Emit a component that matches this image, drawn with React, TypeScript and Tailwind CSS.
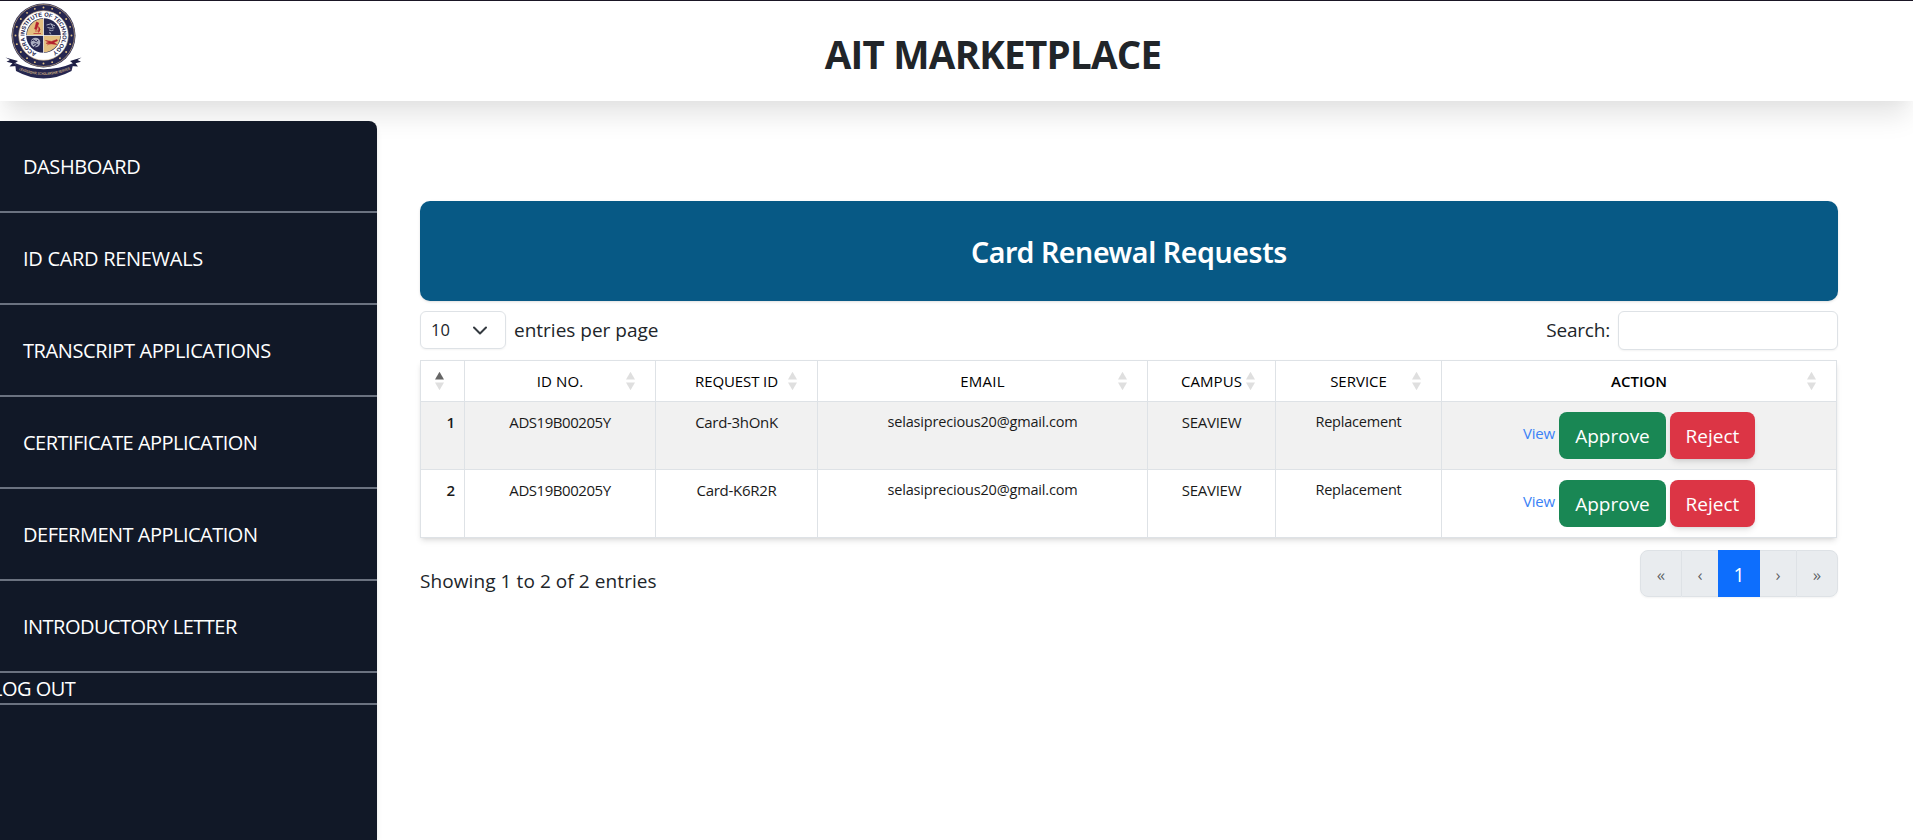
type SortState = 'asc' | 'none';

const navItems = [
  { label: 'DASHBOARD', tracking: 'tracking-[-0.4px]' },
  { label: 'ID CARD RENEWALS', tracking: 'tracking-[-0.3px]' },
  { label: 'TRANSCRIPT APPLICATIONS', tracking: 'tracking-[-0.4px]' },
  { label: 'CERTIFICATE APPLICATION', tracking: 'tracking-[-0.52px]' },
  { label: 'DEFERMENT APPLICATION', tracking: 'tracking-[-0.5px]' },
  { label: 'INTRODUCTORY LETTER', tracking: 'tracking-[-0.52px]' },
];

const columns: { label: string; style: string; sort: SortState }[] = [
  { label: '', style: 'w-[44px]', sort: 'asc' },
  { label: 'ID NO.', style: 'w-[191px] tracking-[0.1px]', sort: 'none' },
  { label: 'REQUEST ID', style: 'w-[162px] tracking-[-0.1px]', sort: 'none' },
  { label: 'EMAIL', style: 'w-[330px] tracking-[0.2px]', sort: 'none' },
  { label: 'CAMPUS', style: 'w-[128px] tracking-[0.1px]', sort: 'none' },
  { label: 'SERVICE', style: 'w-[166px]', sort: 'none' },
  { label: 'ACTION', style: 'w-[395px]', sort: 'none' },
];

const requests = [
  { no: 1, id: 'ADS19B00205Y', request: 'Card-3hOnK', email: 'selasiprecious20@gmail.com', campus: 'SEAVIEW', service: 'Replacement' },
  { no: 2, id: 'ADS19B00205Y', request: 'Card-K6R2R', email: 'selasiprecious20@gmail.com', campus: 'SEAVIEW', service: 'Replacement' },
];

const stars = Array.from({ length: 20 }, (_, i) => {
  const a = (i / 20) * Math.PI * 2;
  return { x: 43.5 + 28 * Math.sin(a), y: 35.5 - 28 * Math.cos(a) };
});

function Crest() {
  return (
    <svg width="90" height="84" viewBox="0 0 90 84" className="-mt-px shrink-0" aria-label="Accra Institute of Technology">
      <defs>
        <path id="motto-ring" d="M36.4 53.1 A19 19 0 1 1 50.6 53.1" />
        <path id="motto-ribbon" d="M18 69.5 Q43.5 80.5 70 69.5" />
      </defs>
      <circle cx="43.5" cy="35.5" r="32" fill="#25264f" />
      <circle cx="43.5" cy="35.5" r="31" fill="none" stroke="#c9ae84" strokeWidth="0.7" />
      <circle cx="43.5" cy="35.5" r="24.8" fill="#fff" stroke="#c9ae84" strokeWidth="0.6" />
      {stars.map((s, i) => (
        <circle key={i} cx={s.x} cy={s.y} r="0.95" fill="#e0c184" />
      ))}
      <text fontSize="5.8" fontWeight="700" fill="#25264f" fontFamily="Liberation Sans, sans-serif">
        <textPath href="#motto-ring" textLength="102" lengthAdjust="spacing">
          ACCRA INSTITUTE OF TECHNOLOGY
        </textPath>
      </text>
      <circle cx="43.5" cy="35.5" r="17.3" fill="#25264f" />
      <path d="M43.5 35.5 V18.8 A16.7 16.7 0 0 0 26.8 35.5 Z" fill="#e3bf80" />
      <path d="M43.5 35.5 V52.2 A16.7 16.7 0 0 0 60.2 35.5 Z" fill="#e3bf80" />
      <path d="M43.5 18 V53 M26 35.5 H61" stroke="#fff" strokeWidth="0.7" />
      <path d="M36.5 22 l2.2 1 -2.2 6.5 -1.8 -.6 z M38.5 26.5 q3 3 0 6 M33.5 33.5 h7.5 M35 31 h4" fill="#b3202c" stroke="#b3202c" strokeWidth="0.7" />
      <path d="M46.5 25 q4 -2.5 8.5 .8 M47.5 27.5 q4 1.5 7 .3 M49 30 q3 1.3 4.5 0 M50 32 q-1 1.5 1.2 2.2 M51 23.5 l2 4" fill="none" stroke="#b9bccd" strokeWidth="0.9" />
      <circle cx="35.5" cy="42.5" r="4.8" fill="#a9adc0" />
      <path d="M31.5 41 q2 -2 3.5 0 t3 -1 M33 44.5 q2.5 -2 5 .5 M34 47 l3 -2" fill="none" stroke="#25264f" strokeWidth="1" />
      <path d="M45.5 40.5 l6 1 5.5 -2 .5 1.2 -3.6 1.8 3 2 -4.8 -.6 -6 -.6 3 -1.3 z M47 45 l4 -1.5" fill="#b3202c" stroke="#b3202c" strokeWidth="0.5" />
      <path d="M5.5 57.5 L18 61 L14.5 63.5 L17 66 L9.5 66.5 L12.5 63.2 L6.5 61.8 L10 60 Z" fill="#1c1d42" />
      <path d="M81.5 57.5 L70 61 L73 63.5 L70.5 66 L78 66.5 L75.5 63.2 L81 61.8 L77.5 60 Z" fill="#1c1d42" />
      <path d="M15 63 Q43.5 75.5 73.5 63 L71.5 71 Q43.5 86 16 71 Z" fill="#25264f" />
      <text fontSize="3.8" fontWeight="700" fill="#c9ae84" fontFamily="Liberation Sans, sans-serif">
        <textPath href="#motto-ribbon" startOffset="1" textLength="53" lengthAdjust="spacingAndGlyphs">
          LEADERSHIP, SCHOLARSHIP, SERVICE
        </textPath>
      </text>
    </svg>
  );
}

function SortIcon({ state }: { state: SortState }) {
  return (
    <svg width="9" height="19" viewBox="0 0 9 19" className="absolute right-[20px] top-1/2 -translate-y-1/2">
      <path d="M4.5 0.3 L9 8 H0 Z" fill={state === 'asc' ? '#666' : '#dfdfdf'} />
      <path d="M4.5 18.7 L9 11 H0 Z" fill="#dfdfdf" />
    </svg>
  );
}

function Header() {
  return (
    <header className="relative z-0 flex h-[101px] items-start border-t border-[#1a1625] bg-white shadow-[0_20px_25px_-5px_rgba(0,0,0,0.1),0_10px_10px_-5px_rgba(0,0,0,0.02)]">
      <Crest />
      <h1 className="flex-1 pr-[17px] pt-[26px] text-center text-[38.5px] font-bold leading-[54px] tracking-[-0.75px] text-[#212529]">
        AIT MARKETPLACE
      </h1>
    </header>
  );
}

function Sidebar() {
  return (
    <aside className="z-10 w-[377px] shrink-0 overflow-clip rounded-tr-lg bg-[#111827] text-xl text-white shadow-md">
      <nav className="flex flex-col">
        {navItems.map((item) => (
          <a key={item.label} className={`flex h-[92px] items-center border-b-2 border-[#6b7280] pl-[23px] pt-[2px] ${item.tracking}`}>
            {item.label}
          </a>
        ))}
        <a className="-ml-2 flex h-8 items-center border-b-2 border-[#6b7280] pt-[2px] tracking-[-0.5px]">LOG OUT</a>
      </nav>
    </aside>
  );
}

function RequestsTable() {
  return (
    <table className="mt-[10px] w-[1417px] table-fixed border-collapse bg-white text-[15px] text-black shadow-md">
      <thead>
        <tr className="h-[41px]">
          {columns.map((c) => (
            <th
              key={c.label}
              className={`relative border border-[#dee2e6] p-0 ${c.label === 'ACTION' ? 'font-semibold' : 'font-normal'} ${c.style}`}
            >
              {c.label}
              <SortIcon state={c.sort} />
            </th>
          ))}
        </tr>
      </thead>
      <tbody>
        {requests.map((r) => (
          <tr key={r.no} className="h-[68px] text-center align-top leading-[22px] text-[#1a1a1a] odd:bg-[#f1f1f1] [&>td]:border [&>td]:border-[#dee2e6] [&>td]:px-0 [&>td]:pt-[9px]">
            <td className="text-right font-semibold">
              <span className="pr-[9px]">{r.no}</span>
            </td>
            <td className="tracking-[-0.45px]">{r.id}</td>
            <td className="tracking-[-0.3px]">{r.request}</td>
            <td className="text-[14.5px] tracking-[-0.18px]">{r.email}</td>
            <td className="tracking-[-0.25px]">{r.campus}</td>
            <td className="text-[14.5px] tracking-[-0.2px]">{r.service}</td>
            <td>
              <div className="flex items-center justify-center gap-1 pt-px">
                <a className="-mt-[6px] text-[15px] tracking-[-0.2px] text-[#3b82f6]">View</a>
                <button className="h-[47px] w-[107px] rounded-lg bg-[#198754] text-[19px] text-white">Approve</button>
                <button className="h-[47px] w-[85px] rounded-lg bg-[#dc3545] text-[19px] text-white shadow-md">Reject</button>
              </div>
            </td>
          </tr>
        ))}
      </tbody>
    </table>
  );
}

function Pagination() {
  const side = 'flex items-center justify-center border-y border-[#dee2e6] bg-[#e9ecef] text-[17px] text-[#212529]/70 pt-[2px]';
  return (
    <div className="flex h-[47px] rounded-lg text-[19.5px] shadow-xs">
      <span className={`${side} w-[42px] rounded-l-lg border-x`}>«</span>
      <span className={`${side} w-[36px]`}>‹</span>
      <span className="flex w-[42px] items-center justify-center bg-[#0d6efd] pt-[2px] text-white">1</span>
      <span className={`${side} w-[36px]`}>›</span>
      <span className={`${side} w-[42px] rounded-r-lg border-x`}>»</span>
    </div>
  );
}

export default function App() {
  return (
    <div className="flex h-[840px] w-full flex-col overflow-hidden bg-white font-['Open_Sans','Noto_Sans',sans-serif]">
      <Header />
      <div className="flex flex-1 pt-5">
        <Sidebar />
        <main className="ml-[43px] w-[1418px] pt-20 text-[19px] text-[#212529]">
          <h2 className="flex h-[100px] items-center justify-center rounded-[10px] bg-[#075985] pt-[2px] font-['Noto_Sans','Open_Sans',sans-serif] text-[28.5px] font-semibold tracking-[-0.4px] text-white shadow-sm">
            Card Renewal Requests
          </h2>
          <div className="mt-[10px] flex h-[39px] items-center justify-between">
            <div className="flex items-center">
              <div className="-mt-px flex h-[38px] w-[86px] items-center justify-between rounded-md border border-[#dee2e6] pl-[10px] pr-[18px] text-[16.5px] shadow-xs">
                10
                <svg width="14" height="9" viewBox="0 0 14 9" fill="none" stroke="#343a40" strokeWidth="2" strokeLinecap="round" strokeLinejoin="round">
                  <path d="M1 1.5 L7 7.5 L13 1.5" />
                </svg>
              </div>
              <span className="pl-2">entries per page</span>
            </div>
            <div className="flex items-center">
              <span className="pr-2 tracking-[-0.2px]">Search:</span>
              <div className="h-[39px] w-[220px] rounded-md border border-[#dee2e6] bg-white shadow-xs" />
            </div>
          </div>
          <RequestsTable />
          <div className="mt-[12px] flex items-start justify-between">
            <p className="pt-[17px] leading-[28px] tracking-[0.08px]">Showing 1 to 2 of 2 entries</p>
            <Pagination />
          </div>
        </main>
      </div>
    </div>
  );
}
